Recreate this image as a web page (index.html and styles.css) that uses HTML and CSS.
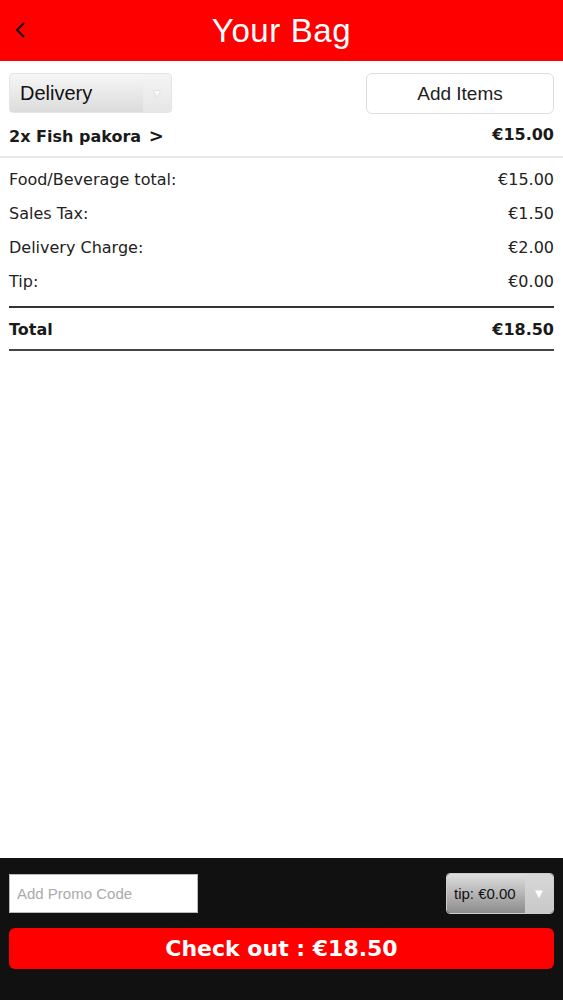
FILE: index.html
```html
<!DOCTYPE html>
<html lang="en">
<head>
    <meta charset="UTF-8">
    <meta name="viewport" content="width=device-width, initial-scale=1.0">
    <title>Your Bag</title>
    <link rel="stylesheet" href="styles.css">
</head>
<body>
    <div class="app">
        <!-- header -->
        <div class="topbar">
            <span class="back">
                <svg width="14" height="18" viewBox="0 0 14 18"><path d="M10 2 L3 9 L10 16" fill="none" stroke="#111" stroke-width="2"/></svg>
            </span>
            <h1>Your Bag</h1>
        </div>

        <!-- options -->
        <div class="options">
            <div class="select delivery">
                <span class="select-label">Delivery</span>
                <span class="select-arrow">&#9660;</span>
            </div>
            <div class="button add-items">Add Items</div>
        </div>

        <div class="item-row">
            <span>2x Fish pakora <span class="chev">&gt;</span></span>
            <span>€15.00</span>
        </div>

        <!-- summary -->
        <div class="summary">
            <div class="line"><span>Food/Beverage total:</span><span>€15.00</span></div>
            <div class="line"><span>Sales Tax:</span><span>€1.50</span></div>
            <div class="line"><span>Delivery Charge:</span><span>€2.00</span></div>
            <div class="line"><span>Tip:</span><span>€0.00</span></div>
            <div class="total"><span>Total</span><span>€18.50</span></div>
        </div>

        <div class="spacer"></div>

        <!-- footer -->
        <div class="footer">
            <div class="footer-row">
                <input class="promo" type="text" placeholder="Add Promo Code">
                <div class="select tip">
                    <span class="select-label">tip: €0.00</span>
                    <span class="select-arrow">&#9660;</span>
                </div>
            </div>
            <div class="checkout">Check out : €18.50</div>
        </div>
    </div>
</body>
</html>
```

FILE: styles.css
```css
* {
    margin: 0;
    padding: 0;
    box-sizing: border-box;
}

body {
    font-family: 'DejaVu Sans', Verdana, sans-serif;
    background: #fff;
    color: #1a1a1a;
}

.app {
    height: 1000px;
    display: flex;
    flex-direction: column;
}

/* header */
.topbar {
    height: 61px;
    background: #ff0000;
    display: flex;
    align-items: center;
    justify-content: center;
    position: relative;
}

.topbar h1 {
    font-family: 'Liberation Sans', Arial, sans-serif;
    font-weight: normal;
    font-size: 33px;
    color: #fff;
    letter-spacing: 0.6px;
}

.back {
    position: absolute;
    left: 14px;
    top: 21px;
    display: flex;
}

/* options row */
.options {
    display: flex;
    justify-content: space-between;
    padding: 12px 9px 0;
}

.select {
    display: flex;
    font-family: 'Liberation Sans', Arial, sans-serif;
    border-radius: 4px;
    overflow: hidden;
}

.select-label {
    flex: 1;
    display: flex;
    align-items: center;
}

.select-arrow {
    width: 28px;
    display: flex;
    align-items: center;
    justify-content: center;
    font-size: 11px;
}

.delivery {
    width: 163px;
    height: 40px;
    background: linear-gradient(#f6f6f6, #dcdcdc);
    border: 1px solid #e4e4e4;
}

.delivery .select-label {
    padding-left: 10px;
    font-size: 20px;
    color: #111;
}

.delivery .select-arrow {
    background: linear-gradient(#f4f4f4, #e6e6e6);
    color: #fbfbfb;
    text-shadow: 0 0 1px #aaa;
}

.button {
    font-family: 'Liberation Sans', Arial, sans-serif;
    background: #fff;
    border: 1px solid #dedede;
    border-radius: 6px;
    display: flex;
    align-items: center;
    justify-content: center;
}

.add-items {
    width: 188px;
    height: 41px;
    font-size: 19px;
    color: #222;
}

/* item */
.item-row {
    display: flex;
    justify-content: space-between;
    padding: 11px 9px 10px;
    font-weight: bold;
    font-size: 16px;
    border-bottom: 2px solid #e8e8e8;
}

.chev {
    font-size: 18px;
    margin-left: 2px;
}

/* summary */
.summary {
    padding: 12px 9px 0;
}

.line {
    display: flex;
    justify-content: space-between;
    font-size: 16px;
    height: 34px;
    color: #222;
}

.total {
    display: flex;
    justify-content: space-between;
    font-weight: bold;
    font-size: 16px;
    border-top: 2px solid #333;
    border-bottom: 2px solid #444;
    padding: 12px 0 10px;
}

.spacer {
    flex: 1;
}

/* footer */
.footer {
    height: 142px;
    background: #111;
    padding: 15px 9px 0;
}

.footer-row {
    display: flex;
    justify-content: space-between;
    align-items: center;
}

.promo {
    width: 189px;
    height: 39px;
    border: 1px solid #bbb;
    padding-left: 7px;
    font-family: 'Liberation Sans', Arial, sans-serif;
    font-size: 15px;
    background: #fff;
}

.promo::placeholder {
    color: #aaa;
}

.tip {
    width: 108px;
    height: 41px;
    border: 1px solid #ccc;
}

.tip .select-label {
    background: linear-gradient(#dedede, #8c8c8c);
    padding-left: 7px;
    font-size: 15px;
    color: #111;
}

.tip .select-arrow {
    background: linear-gradient(#d8d8d8, #c8c8c8);
    color: #fff;
    font-size: 13px;
}

.checkout {
    margin-top: 14px;
    height: 41px;
    background: #ff0000;
    border-radius: 6px;
    color: #fff;
    font-weight: bold;
    font-size: 22px;
    display: flex;
    align-items: center;
    justify-content: center;
}
```
